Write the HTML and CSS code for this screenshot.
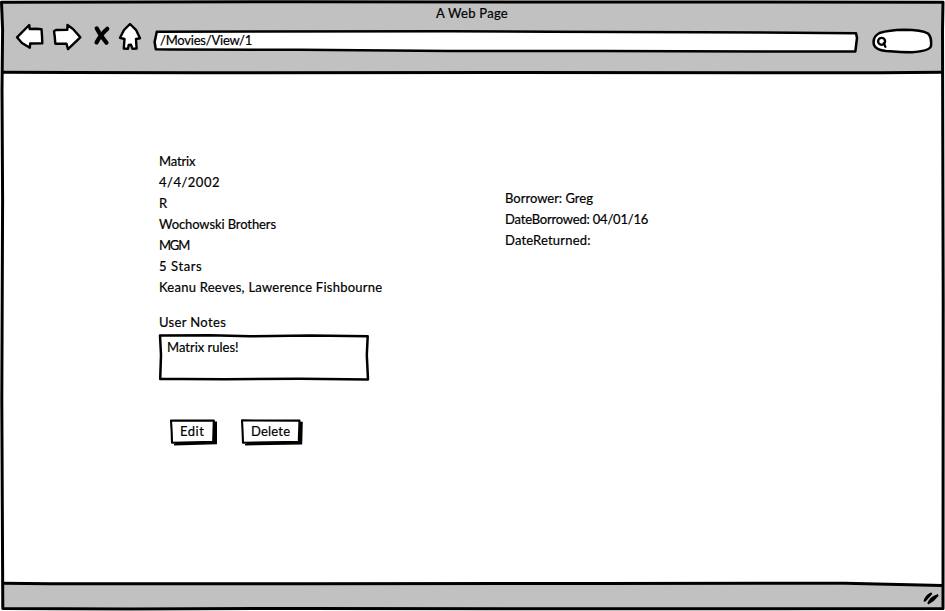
FILE: index.html
```html
<!DOCTYPE html>
<html lang="en">
<head>
<meta charset="utf-8">
<title>A Web Page</title>
<link rel="stylesheet" href="styles.css">
</head>
<body>
<div class="window">
  <svg class="frame" viewBox="0 0 945 611" aria-hidden="true">
    <path class="chrome" d="M2 2H943V72.5H2ZM2 583H700L943 585.5V608.5H2Z"/>
    <path class="line" d="M1.5 2.2L300 1.8L943 2.2L942.5 30L943.2 300L943 608.6L600 608.8L300 608.4L130 609L60 608.7L2.8 608.4L1.8 400L2.6 200L2 90L2.6 30Z"/>
    <path class="line" d="M3 72.2L70 72.6L200 72.8L500 72.5L880 72.7L942 72.2"/>
    <path class="line" d="M3 583.2L50 583.7L300 583.8L600 583.5L845 583.2L942 585.6"/>
  </svg>
  <header class="header">
    <div class="title"><span class="t-title">A Web Page</span></div>
    <div class="toolbar">
      <svg class="back" viewBox="14 20 32 34"><path class="icon" d="M17 37.3L29.2 25L29.7 29L36 28.7L41.5 29.2L42 36L42.3 43.2L30.2 43.5L29.8 47.7L22 43Z"/></svg>
      <svg class="forward" viewBox="51 20 32 34"><path class="icon" d="M54 31.2L56 30L67.3 29.9L67.5 25L73 29L80.3 37.3L68 49.2L66.5 43.8L55.3 43.7L54.8 37Z"/></svg>
      <svg class="stop" viewBox="91 20 22 34"><path class="cross" d="M96.7 28.4L100.8 35.3L106.5 42.7"/><path class="cross" d="M107.3 28.8Q101 34 96.5 42.4"/></svg>
      <svg class="home" viewBox="117 20 26 34"><path class="icon" d="M130 24L136.2 30.2L140 38.2L136 39L136.6 48.5L132.4 48.7L131 44.8L128.7 45L128 48.8L123.8 48.5L124.5 39L120 37.8L124 30Z"/></svg>
      <div class="address">
        <svg class="sketch" viewBox="152 28 708 26" aria-hidden="true"><path class="box" d="M156.8 31.8L450 31.2L550 31.8L700 32.2L856 33.2L857 38L855.3 51.6L600 51.1L450 51L300 49.8L170 49.4L155.8 49.2L154.6 42Z"/></svg>
        <span class="t-url">/Movies/View/1</span>
      </div>
      <svg class="search" viewBox="871 26 64 30"><path class="box" d="M879.5 33Q889 30 904 29.8Q922 30 928 33.5Q931.8 37 931 46Q929.5 51 912 52.2Q902 52.2 886 51Q876 50 874 45Q872 37 879.5 33Z"/><circle class="lens" cx="881.6" cy="41.3" r="3.5"/><path class="lens" d="M883.7 43.2L885.4 46.8"/></svg>
    </div>
  </header>
  <main class="content">
    <section class="movie">
      <p><span class="t-matrix">Matrix</span></p>
      <p><span class="t-date">4/4/2002</span></p>
      <p><span>R</span></p>
      <p><span class="t-director">Wochowski Brothers</span></p>
      <p><span class="t-studio">MGM</span></p>
      <p><span class="t-stars">5 Stars</span></p>
      <p><span class="t-cast">Keanu Reeves, Lawerence Fishbourne</span></p>
      <p class="label"><span class="t-label">User Notes</span></p>
      <div class="notes">
        <svg class="sketch" viewBox="157 332 214 50" aria-hidden="true"><path class="box" d="M160 335.6L210 335.3L250 336.2L310 335.5L367.7 336.2L366.8 355L368 379.4L300 378.8L225 379.3L180 379L160.2 379L161 355Z"/></svg>
        <span class="t-notes">Matrix rules!</span>
      </div>
      <div class="actions">
        <button class="btn edit" type="button">
          <svg class="sketch" viewBox="168 417 50 30" aria-hidden="true"><path class="shadow" d="M174 444L214 421.5H217V444.3L174 445.5Z"/><path class="box thin" d="M171 420.5L213.8 420.6L213.2 440.8L213.8 441.8L172 442.8L171.7 432Z"/></svg>
          <span class="t-edit">Edit</span>
        </button>
        <button class="btn delete" type="button">
          <svg class="sketch" viewBox="239 417 66 30" aria-hidden="true"><path class="shadow" d="M245 444L299 421.8H302.8L302.2 444.6L245 445.5Z"/><path class="box thin" d="M242 420.4L299.5 420.6L298.8 440L299.4 441.8L243 442.8L242.6 432Z"/></svg>
          <span class="t-delete">Delete</span>
        </button>
      </div>
    </section>
    <section class="loan">
      <p><span class="t-borrower">Borrower: Greg</span></p>
      <p><span class="t-borrowed">DateBorrowed: 04/01/16</span></p>
      <p><span class="t-returned">DateReturned:</span></p>
    </section>
  </main>
  <footer class="footer">
    <svg class="grip" viewBox="920 588 22 19"><path d="M924.8 600.6Q926.5 596 931 593.8M928.6 603Q931 597.5 937.3 595.5M925 600.6L931 593.8M928.6 603Q933 601 937.3 595.5"/></svg>
  </footer>
</div>
</body>
</html>
```
FILE: styles.css
```css
* { box-sizing: border-box; }

body {
  margin: 0;
  background: #fff;
  color: #000;
  font: 13px/21px Lato, "Liberation Sans", sans-serif;
  -webkit-text-stroke: 0.2px #000;
}

p { margin: 0; }
svg { display: block; flex: none; }

.window {
  position: relative;
  width: 945px;
  height: 611px;
  display: grid;
  grid-template-rows: 73px 1fr 28px;
  overflow: hidden;
}

.frame, .sketch {
  position: absolute;
  inset: 0;
  width: 100%;
  height: 100%;
}

.header, .content, .footer { position: relative; }

.chrome { fill: #c1c1c1; }
.line { fill: none; stroke: #000; stroke-width: 3; stroke-linejoin: round; }
.icon { fill: #fff; stroke: #000; stroke-width: 2.4; stroke-linejoin: round; }
.box { fill: #fff; stroke: #000; stroke-width: 2.5; stroke-linejoin: round; }
.thin { stroke-width: 2.1; }
.cross { fill: none; stroke: #000; stroke-width: 4.2; stroke-linecap: round; }
.lens { fill: none; stroke: #000; stroke-width: 2.3; stroke-linecap: round; }

.title { height: 20px; padding: 3px 0 0 436px; }
.toolbar { display: flex; padding-left: 14px; }
.back, .forward { width: 32px; height: 34px; }
.forward { margin-left: 5px; }
.stop { width: 22px; height: 34px; margin-left: 8px; }
.home { width: 26px; height: 34px; margin-left: 4px; }
.address {
  position: relative;
  width: 708px;
  height: 26px;
  margin: 8px 0 0 9px;
  padding: 2px 0 0 8px;
}
.search { width: 64px; height: 30px; margin: 6px 0 0 11px; }

.content { display: flex; padding: 78px 0 0 159px; }
.movie { width: 346px; }
.label { margin-top: 14px; }
.notes {
  position: relative;
  width: 214px;
  height: 50px;
  margin: -1px 0 0 -2px;
  padding: 5px 0 0 10px;
}
.loan { padding-top: 37px; }

.actions { display: flex; gap: 21px; margin: 35px 0 0 9px; }
.btn {
  position: relative;
  height: 30px;
  padding: 0 0 2px 12px;
  border: 0;
  background: none;
  color: inherit;
  font: inherit;
  line-height: 28px;
  text-align: left;
}
.edit { width: 50px; }
.delete { width: 66px; }

.grip { width: 22px; height: 19px; margin: 5px 0 0 920px; }
.grip path { fill: none; stroke: #000; stroke-width: 2.3; stroke-linecap: round; }

span { position: relative; white-space: nowrap; }

.t-title { letter-spacing: 0.27px; }
.t-url { letter-spacing: -0.22px; }
.t-matrix { letter-spacing: -0.15px; }
.t-date { letter-spacing: 0.5px; }
.t-director { letter-spacing: -0.1px; }
.t-studio { letter-spacing: -1.2px; }
.t-stars { letter-spacing: 0.6px; }
.t-cast { letter-spacing: 0.25px; }
.t-label { letter-spacing: 0.35px; }
.t-edit { letter-spacing: 0.5px; }
.t-delete { letter-spacing: 0.2px; }
.t-borrowed { letter-spacing: -0.19px; }
.t-returned { letter-spacing: 0.18px; }
```
